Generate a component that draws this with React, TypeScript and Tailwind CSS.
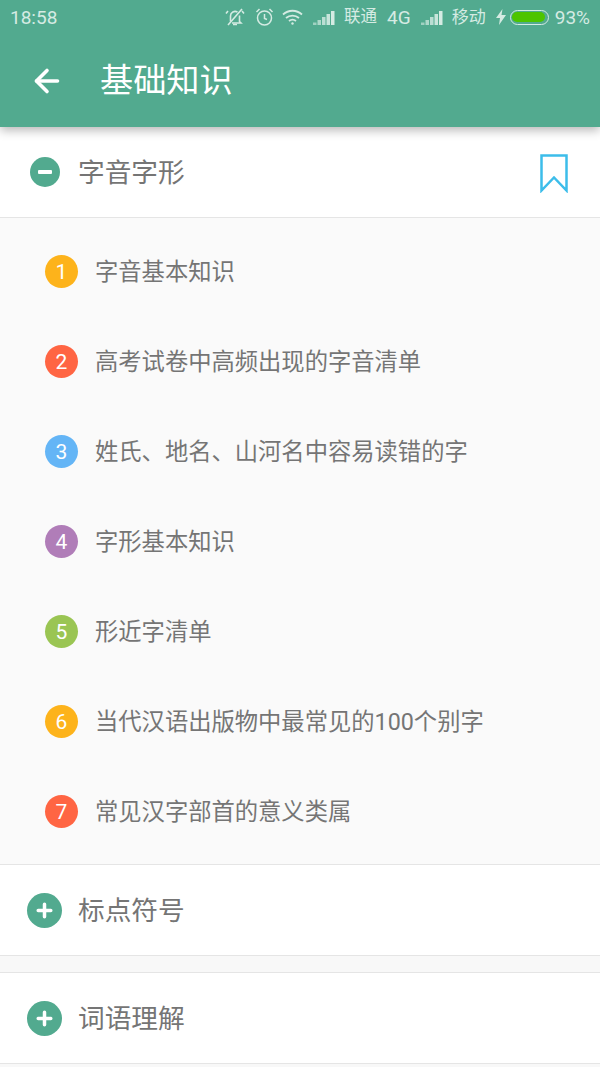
import { ArrowLeft } from "lucide-react";

const topics = [
  { label: "字音基本知识", color: "bg-[#fdb31b]" },
  { label: "高考试卷中高频出现的字音清单", color: "bg-[#ff6543]" },
  { label: "姓氏、地名、山河名中容易读错的字", color: "bg-[#64b5f6]" },
  { label: "字形基本知识", color: "bg-[#b07db8]" },
  { label: "形近字清单", color: "bg-[#9ac553]" },
  { label: "当代汉语出版物中最常见的100个别字", color: "bg-[#fdb31b]" },
  { label: "常见汉字部首的意义类属", color: "bg-[#ff6543]" },
];

function Signal() {
  return (
    <svg width="22" height="15" viewBox="0 0 22 15" fill="#d5ebe3">
      <rect x="0" y="12.5" width="3.5" height="2.5" opacity="0.6" />
      <rect x="4.5" y="10" width="3.5" height="5" opacity="0.7" />
      <rect x="9" y="7" width="3.5" height="8" opacity="0.8" />
      <rect x="13.5" y="4" width="3.5" height="11" opacity="0.9" />
      <rect x="18" y="1" width="3.5" height="14" />
    </svg>
  );
}

function StatusBar() {
  return (
    <div className="flex h-[40px] items-center justify-between px-[10px] pb-[6px] text-[19px] leading-none text-[#d5ebe3]">
      <span>18:58</span>
      <div className="flex items-center">
        <svg width="20" height="20" viewBox="0 0 20 20" fill="none" stroke="#d5ebe3" strokeWidth="1.6" className="mr-[10px]">
          <path d="M5.5 14.5V9a4.5 4.5 0 0 1 7-3.800M14.5 8.500v6l1.500 1.500H7" />
          <path d="M8 17.5h4M17 2 3 18" />
          <path d="M1 6.5 3 4M19 6.500 17 4" />
        </svg>
        <svg width="19" height="20" viewBox="0 0 19 20" fill="none" stroke="#d5ebe3" strokeWidth="1.5" className="mr-[8px]">
          <circle cx="9.5" cy="11" r="7" />
          <path d="M9.5 7v4.5l2.5 1M1.5 5 4.5 2M17.5 5l-3-3" />
        </svg>
        <svg width="21" height="16" viewBox="0 0 21 16" fill="none" stroke="#d5ebe3" strokeWidth="1.8" className="mr-[10px]">
          <path d="M1 5.5c5.5-5 13.500-5 19 0M4 9c3.700-3.300 9.300-3.300 13 0M7 12c2-1.600 5-1.600 7 0" />
          <circle cx="10.5" cy="14.5" r="1.2" fill="#d5ebe3" stroke="none" />
        </svg>
        <Signal />
        <span className="ml-[9px] text-[16.5px]">联通</span>
        <span className="ml-[10px]">4G</span>
        <span className="ml-[10px]"><Signal /></span>
        <span className="ml-[9px] text-[17px]">移动</span>
        <svg width="10" height="16" viewBox="0 0 10 16" fill="#d5ebe3" className="ml-[10px]">
          <path d="M6.5 0 0 9h4l-1 7 7-10H5.5z" />
        </svg>
        <div className="ml-[4px] flex h-[15px] w-[39px] items-center rounded-full border border-[#d5ebe3] p-[1.5px]">
          <div className="h-full w-[33px] rounded-full bg-[#4dc400]" />
        </div>
        <span className="ml-[6px]">93%</span>
      </div>
    </div>
  );
}

function SectionRow({ title, open }: { title: string; open?: boolean }) {
  return (
    <div className="flex h-[90px] items-center bg-white">
      {open ? (
        <div className="ml-[30px] flex h-[30px] w-[30px] items-center justify-center rounded-full bg-[#52aa8f]">
          <div className="h-[4px] w-[14px] rounded-[1px] bg-white" />
        </div>
      ) : (
        <div className="ml-[27px] flex h-[35px] w-[35px] items-center justify-center rounded-full bg-[#52aa8f]">
          <svg width="19" height="19" viewBox="0 0 19 19" stroke="white" strokeWidth="3.5" strokeLinecap="round">
            <path d="M9.5 3.200v12.600M3.200 9.500h12.600" />
          </svg>
        </div>
      )}
      <span className={`${open ? "ml-[18px]" : "ml-[16px]"} mt-[2px] text-[26.7px] leading-none text-[#757575]`}>{title}</span>
      {open && (
        <svg width="28" height="39" viewBox="0 0 28 39" fill="none" stroke="#3cbdea" strokeWidth="2.5" className="ml-auto mr-[32px] mt-[2px]">
          <path d="M1.5 1.500h25v35L14 23.500 1.500 36.500z" />
        </svg>
      )}
    </div>
  );
}

export default function App() {
  return (
    <div className="flex h-[1067px] w-[600px] flex-col overflow-hidden bg-[#f8f8f8] font-['Roboto','Noto_Sans_CJK_SC',sans-serif]">
      <header className="relative z-10 h-[127px] shrink-0 bg-[#52aa8f] shadow-[0_3px_10px_rgba(0,0,0,0.3)]">
        <StatusBar />
        <div className="flex h-[81px] items-center">
          <ArrowLeft size={36} strokeWidth={2.4} className="ml-[29px] text-white" />
          <h1 className="ml-[35px] text-[33.2px] font-normal leading-none text-white">基础知识</h1>
        </div>
      </header>

      <SectionRow title="字音字形" open />
      <div className="border-y border-[#e5e5e5] bg-[#fafafa] py-[8px]">
        {topics.map((t, i) => (
          <div key={t.label} className="flex h-[90px] items-center">
            <div className={`ml-[45px] flex h-[33px] w-[33px] items-center justify-center rounded-full pt-[2px] text-[21px] leading-none text-white ${t.color}`}>
              {i + 1}
            </div>
            <span className="ml-[17px] mt-[3px] text-[23.3px] leading-none text-[#757575]">{t.label}</span>
          </div>
        ))}
      </div>
      <SectionRow title="标点符号" />
      <div className="h-[18px] shrink-0 border-y border-[#e5e5e5] bg-[#f8f8f8]" />
      <SectionRow title="词语理解" />
      <div className="shrink-0 border-t border-[#e5e5e5]" />
    </div>
  );
}
